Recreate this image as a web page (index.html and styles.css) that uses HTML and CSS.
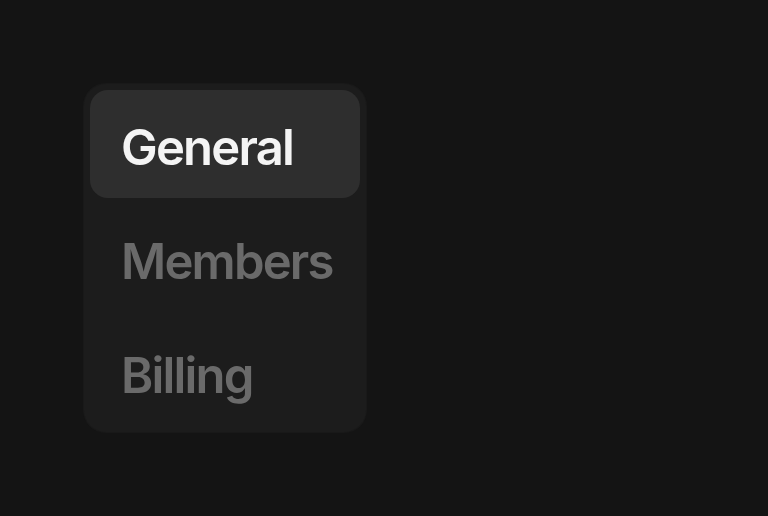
FILE: index.html
```html
<!DOCTYPE html>
<html lang="en">
<head>
<meta charset="utf-8">
<title>Settings nav</title>
<link rel="stylesheet" href="styles.css">
</head>
<body>
<nav class="tabs">
  <a class="tab tab--active" href="#">General</a>
  <a class="tab" href="#">Members</a>
  <a class="tab" href="#">Billing</a>
</nav>
</body>
</html>
```

FILE: styles.css
```css
html, body {
  margin: 0;
  height: 100%;
  background: #141414;
}
body {
  padding: 84px;
  box-sizing: border-box;
  font-family: Inter, "Noto Sans", sans-serif;
}
.tabs {
  display: flex;
  flex-direction: column;
  gap: 6px;
  width: 270px;
  padding: 6px;
  background: #1c1c1c;
  border-radius: 22px;
  box-shadow: 0 0 0 1px #191919;
}
.tab {
  display: flex;
  align-items: center;
  height: 108px;
  padding: 7px 31px 0;
  box-sizing: border-box;
  border-radius: 18px;
  font-size: 49px;
  font-weight: 600;
  letter-spacing: -1.8px;
  line-height: 1;
  color: #6a6a6a;
  text-decoration: none;
}
.tab--active {
  background: #2e2e2e;
  color: #f4f4f4;
}
```
